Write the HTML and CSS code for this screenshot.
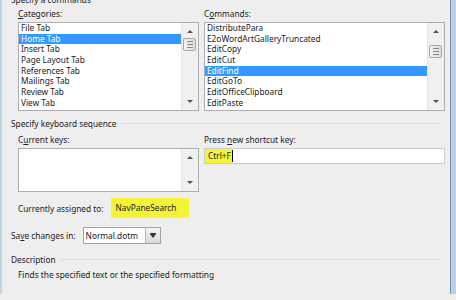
FILE: index.html
```html
<!DOCTYPE html>
<html lang="en">
<head>
  <meta charset="UTF-8">
  <title>Customize Keyboard</title>
  <link rel="stylesheet" href="styles.css">
</head>
<body>
  <div class="window">
    <div class="group-title top-title">Specify a commands</div>

    <div class="two-col">
      <div class="field">
        <label class="lbl"><u>C</u>ategories:</label>
        <div class="listbox tall">
          <ul class="items">
            <li>File Tab</li>
            <li class="sel">Home Tab</li>
            <li>Insert Tab</li>
            <li>Page Layout Tab</li>
            <li>References Tab</li>
            <li>Mailings Tab</li>
            <li>Review Tab</li>
            <li>View Tab</li>
          </ul>
          <div class="vscroll">
            <span class="arrow up"></span>
            <span class="thumb thumb-top"><i></i><i></i><i></i></span>
            <span class="arrow down"></span>
          </div>
        </div>
      </div>
      <div class="field">
        <label class="lbl">C<u>o</u>mmands:</label>
        <div class="listbox tall">
          <ul class="items">
            <li>DistributePara</li>
            <li>E2oWordArtGalleryTruncated</li>
            <li>EditCopy</li>
            <li>EditCut</li>
            <li class="sel">EditFind</li>
            <li>EditGoTo</li>
            <li>EditOfficeClipboard</li>
            <li>EditPaste</li>
          </ul>
          <div class="vscroll">
            <span class="arrow up"></span>
            <span class="thumb thumb-mid"><i></i><i></i><i></i></span>
            <span class="arrow down"></span>
          </div>
        </div>
      </div>
    </div>

    <div class="group-title seq-title">Specify keyboard sequence<span class="rule"></span></div>

    <div class="two-col keys-row">
      <div class="field">
        <label class="lbl">C<u>u</u>rrent keys:</label>
        <div class="listbox short">
          <ul class="items"></ul>
          <div class="vscroll">
            <span class="arrow up"></span>
            <span class="arrow down"></span>
          </div>
        </div>
      </div>
      <div class="field">
        <label class="lbl">Press <u>n</u>ew shortcut key:</label>
        <div class="textbox"><span class="hl">Ctrl+F</span><span class="caret"></span></div>
      </div>
    </div>

    <div class="assigned">
      <span>Currently assigned to:</span>
      <span class="hl-box">NavPaneSearch</span>
    </div>

    <div class="save-row">
      <span>Sa<u>v</u>e changes in:</span>
      <div class="combo">
        <span class="combo-text">Normal.dotm</span>
        <span class="combo-btn"><span class="arrow down dark"></span></span>
      </div>
    </div>

    <div class="group-title desc-title">Description<span class="rule"></span></div>
    <p class="desc">Finds the specified text or the specified formatting</p>
  </div>
</body>
</html>
```
FILE: styles.css
```css
:root {
  --dlg-bg: #eeeeee;
  --sel-blue: #3399ff;
  --hl-yellow: #f3f338;
  --box-border: #abadb3;
  --text: #222222;
  --font-ui: "Noto Sans", "Open Sans", sans-serif;
}
html, body {
  margin: 0;
  padding: 0;
}
body {
  width: 456px;
  height: 300px;
  overflow: hidden;
  background: var(--dlg-bg);
  font-family: var(--font-ui);
  font-size: 8.3px;
  color: var(--text);
}
.window {
  box-sizing: border-box;
  height: 300px;
  padding: 0 11px 0 9px;
  border-left: 2px solid #c3d4e7;
  border-right: 5px solid #b9d1ea;
  box-shadow: inset -1px 0 0 #7a8ea6;
}
u {
  text-decoration: underline;
  text-underline-offset: 1px;
}

/* group headings with a light rule */
.group-title {
  display: flex;
  align-items: center;
  gap: 4px;
  height: 15px;
  line-height: 15px;
}
.group-title .rule {
  flex: 1;
  border-top: 1px solid #dddddd;
}
.top-title {
  margin-top: -6px;
  height: 12px;
  line-height: 12px;
}
.seq-title {
  margin-top: 5px;
}
.desc-title {
  margin-top: 8px;
}

.two-col {
  display: grid;
  grid-template-columns: 181px 241px;
  column-gap: 5px;
  padding-left: 7px;
}
.lbl {
  display: block;
  height: 13px;
  line-height: 13px;
  margin: 1px 0 2px;
}
.keys-row .lbl {
  margin-top: 2px;
}

/* list boxes */
.listbox {
  display: flex;
  background: #fff;
  border: 1px solid var(--box-border);
  box-sizing: border-box;
}
.listbox.tall {
  height: 89px;
}
.listbox.short {
  height: 44px;
}
.items {
  flex: 1;
  list-style: none;
  margin: 0;
  padding: 0;
}
.items li {
  height: 10.7px;
  line-height: 10.7px;
  padding-left: 2px;
  white-space: nowrap;
}
.items li.sel {
  background: var(--sel-blue);
  color: #fff;
}
.vscroll {
  position: relative;
  width: 16px;
  background: #f0f0f0;
  border-left: 1px solid #e4e4e4;
}
.arrow {
  position: absolute;
  left: 5px;
  width: 0;
  height: 0;
  border-left: 3px solid transparent;
  border-right: 3px solid transparent;
}
.arrow.up {
  top: 7px;
  border-bottom: 3px solid #555;
}
.arrow.down {
  bottom: 7px;
  border-top: 3px solid #555;
}
.thumb {
  position: absolute;
  left: 1px;
  width: 13px;
  height: 13px;
  box-sizing: border-box;
  border: 1px solid #a9a9a9;
  border-radius: 2px;
  background: linear-gradient(to right, #f3f3f3, #dcdcdc);
  display: flex;
  flex-direction: column;
  justify-content: center;
  align-items: center;
  gap: 2px;
}
.thumb i {
  display: block;
  width: 6px;
  height: 1px;
  background: #8a8a8a;
}
.thumb-top {
  top: 15px;
}
.thumb-mid {
  top: 22px;
}

/* shortcut text box */
.textbox {
  display: flex;
  align-items: stretch;
  height: 16px;
  box-sizing: border-box;
  background: #fff;
  border: 1px solid #c9cbcf;
}
.hl {
  background: var(--hl-yellow);
  line-height: 14px;
  padding: 0 1px 0 3px;
}
.caret {
  width: 1px;
  background: #000;
  margin: 1px 0;
}

.assigned {
  display: flex;
  align-items: center;
  gap: 7px;
  margin-top: 6px;
  padding-left: 7px;
  height: 20px;
}
.hl-box {
  width: 78px;
  box-sizing: border-box;
  background: var(--hl-yellow);
  height: 20px;
  line-height: 20px;
  padding-left: 5px;
}

.save-row {
  display: flex;
  align-items: center;
  gap: 7px;
  margin-top: 9px;
  height: 17px;
}
.combo {
  display: flex;
  width: 78px;
  height: 17px;
  box-sizing: border-box;
  border: 1px solid #a5a5a5;
  background: #fff;
}
.combo-text {
  flex: 1;
  line-height: 15px;
  padding-left: 2px;
}
.combo-btn {
  position: relative;
  width: 14px;
  background: linear-gradient(#f4f4f4, #d5dbd5);
  border-left: 1px solid #b5b5b5;
}
.arrow.dark {
  left: 4px;
  bottom: 5px;
  border-top: 4px solid #333;
  box-shadow: 0 -1px 0 #333;
}

.desc {
  margin: 2px 0 0 7px;
  line-height: 12px;
}
```
